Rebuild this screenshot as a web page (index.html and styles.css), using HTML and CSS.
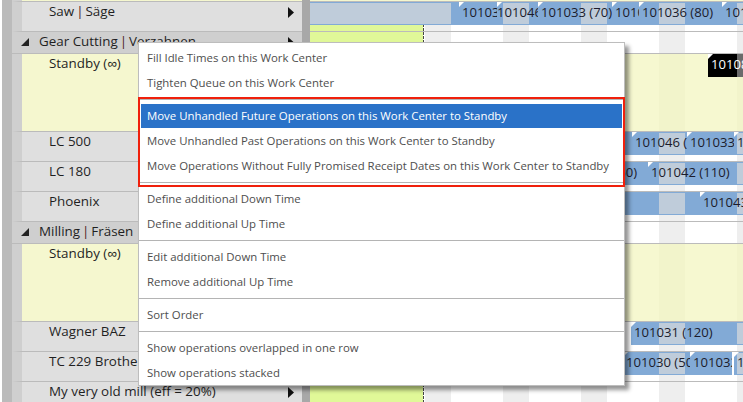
FILE: index.html
```html
<!DOCTYPE html>
<html lang="en">
<head>
<meta charset="utf-8">
<title>Work Center Schedule</title>
<link rel="stylesheet" href="styles.css">
</head>
<body>
<div class="app">
  <div class="rail"></div>
  <div class="labels">
    <div class="tail standby-tail"></div>
    <div class="row"><span class="name">Saw <span class="pipe">|</span> Säge</span><i class="arrow"></i></div>
    <div class="group"><i class="twisty"></i><span class="name">Gear Cutting <span class="pipe">|</span> Verzahnen</span><i class="arrow"></i></div>
    <div class="row standby"><span class="name">Standby (<span class="inf">∞</span>)</span></div>
    <div class="row"><span class="name">LC 500</span><i class="arrow"></i></div>
    <div class="row"><span class="name">LC 180</span><i class="arrow"></i></div>
    <div class="row"><span class="name">Phoenix</span><i class="arrow"></i></div>
    <div class="group"><i class="twisty"></i><span class="name">Milling <span class="pipe">|</span> Fräsen</span><i class="arrow"></i></div>
    <div class="row standby"><span class="name">Standby (<span class="inf">∞</span>)</span></div>
    <div class="row"><span class="name">Wagner BAZ</span><i class="arrow"></i></div>
    <div class="row"><span class="name">TC 229 Brother</span><i class="arrow"></i></div>
    <div class="row last"><span class="name">My very old mill (eff = 20%)</span><i class="arrow"></i></div>
  </div>
  <div class="splitter"></div>
  <div class="chart">
    <div class="today"></div>
    <div class="lane-tail"></div>
    <div class="lane">
      <div class="bar off" style="--x:0px;--w:141px"></div>
      <div class="bar" style="--x:141px;--w:292px"></div>
      <div class="op" style="--x:149px;--w:38px">101032</div>
      <div class="op tight" style="--x:187px;--w:41px">101046</div>
      <div class="op" style="--x:228px;--w:74px">101033 (70)</div>
      <div class="op" style="--x:302px;--w:27px">101033</div>
      <div class="op" style="--x:329px;--w:83px">101036 (80)</div>
      <div class="op" style="--x:412px;--w:21px">101037</div>
    </div>
    <div class="lane head"></div>
    <div class="lane tall">
      <div class="op black" style="--x:398px;--w:35px">101081<b class="black-off"></b></div>
    </div>
    <div class="lane">
      <div class="bar" style="--x:300px;--w:133px"></div>
      <div class="op" style="--x:322px;--w:55px">101046 (90)</div>
      <div class="op" style="--x:377px;--w:47px">101033 (60)</div>
      <div class="op" style="--x:424px;--w:9px">101</div>
    </div>
    <div class="lane">
      <div class="bar" style="--x:300px;--w:133px"></div>
      <div class="op" style="--x:253px;--w:80px">101040 (60)</div>
      <div class="op" style="--x:338px;--w:95px">101042 (110)</div>
    </div>
    <div class="lane">
      <div class="bar" style="--x:300px;--w:133px"></div>
      <div class="op" style="--x:390px;--w:43px">101043</div>
    </div>
    <div class="lane head"></div>
    <div class="lane tall"></div>
    <div class="lane">
      <div class="bar" style="--x:321px;--w:112px"></div>
      <div class="op" style="--x:321px;--w:112px">101031 (120)</div>
    </div>
    <div class="lane">
      <div class="bar" style="--x:300px;--w:122px"></div>
      <div class="bar" style="--x:424px;--w:9px"></div>
      <div class="op" style="--x:313px;--w:67px">101030 (50)</div>
      <div class="op" style="--x:380px;--w:42px">101032</div>
      <div class="op" style="--x:424px;--w:9px">101</div>
    </div>
    <div class="lane"></div>
  </div>
</div>

<div class="menu">
  <div class="item">Fill Idle Times on this Work Center</div>
  <div class="item">Tighten Queue on this Work Center</div>
  <div class="sep"></div>
  <div class="item active">Move Unhandled Future Operations on this Work Center to Standby</div>
  <div class="item">Move Unhandled Past Operations on this Work Center to Standby</div>
  <div class="item">Move Operations Without Fully Promised Receipt Dates on this Work Center to Standby</div>
  <div class="sep"></div>
  <div class="item">Define additional Down Time</div>
  <div class="item">Define additional Up Time</div>
  <div class="sep"></div>
  <div class="item">Edit additional Down Time</div>
  <div class="item">Remove additional Up Time</div>
  <div class="sep"></div>
  <div class="item">Sort Order</div>
  <div class="sep"></div>
  <div class="item">Show operations overlapped in one row</div>
  <div class="item">Show operations stacked</div>
</div>
<div class="callout"></div>
</body>
</html>
```

FILE: styles.css
```css
* { box-sizing: border-box; }
html, body { margin: 0; height: 100%; overflow: hidden; background: #fff; }
body { font-family: "Open Sans", "Noto Sans", sans-serif; color: #1f1f1f; }

.app { display: flex; height: 402px; padding-left: 2px; overflow: hidden; }
.rail { width: 10px; background: #bbbbbb; flex: none; }
.labels { width: 290px; flex: none; display: flex; flex-direction: column; }
.splitter { width: 8px; background: #a8a8a8; flex: none; }
.chart {
  position: relative; flex: 1; min-width: 0; display: flex; flex-direction: column;
  background:
    linear-gradient(90deg, #e0f898 113px, transparent 113px),
    linear-gradient(90deg, #fff 37px, #eeeeee 37px, #eeeeee 63px, #fff 63px) 0 0 / 78px 100%;
}

/* label column */
.tail { height: 2px; flex: none; }
.standby-tail { background: #f5f7cf; border-bottom: 1px solid #bbbbbb; border-left: 10px solid #cfcfcf; }
.row, .group {
  display: flex; justify-content: space-between; flex: none;
  font-size: 13.4px; line-height: 19px; border-bottom: 1px solid #bbbbbb;
}
.row {
  height: 30px; padding: 0 8px 0 27px; background: #dfdfdf; border-left: 10px solid #cfcfcf;
}
.row.standby { height: 78px; background: #f5f7cf; }
.row.last { height: 30px; }
.group { height: 22px; padding: 0 8px 0 9px; background: #cfcfcf; }
.group .name { flex: 1; margin-left: 10px; }
.name { white-space: nowrap; }
.pipe { margin: 0 -1.5px; color: #4a2020; }
.inf { font-family: "Liberation Sans", sans-serif; }
.arrow {
  width: 6px; height: 11px; margin-top: 5px; background: #111; flex: none;
  clip-path: polygon(0 0, 100% 50%, 0 100%);
}
.twisty {
  width: 8px; height: 8px; margin-top: 6px; background: #222; flex: none;
  clip-path: polygon(100% 0, 100% 100%, 0 100%);
}

/* chart lanes */
.today {
  position: absolute; left: 113px; top: 0; bottom: 0; width: 1px;
  background: repeating-linear-gradient(180deg, #444 0 3px, transparent 3px 4px);
}
.lane-tail { height: 2px; flex: none; background: #f5f7cf; border-bottom: 1px solid #bbbbbb; position: relative; }
.lane { position: relative; height: 30px; flex: none; border-bottom: 1px solid #bbbbbb; overflow: hidden; }
.lane.head { height: 22px; }
.lane.tall {
  height: 78px;
  background: linear-gradient(90deg, #f6f8d0 37px, #f2f4cb 37px, #f2f4cb 63px, #f6f8d0 63px) 0 0 / 78px 100%;
}
.bar, .op { position: absolute; top: 0; left: var(--x); width: var(--w); height: 23px; }
.bar {
  border-top: 1px solid #82aad6; border-bottom: 1px solid #82aad6;
  background: linear-gradient(90deg, #82aad6 37px, #bfccda 37px, #bfccda 63px, #82aad6 63px) calc(var(--x) * -1) 0 / 78px 100%;
}
.bar.off { background: #bfccda; }
.op {
  overflow: hidden; white-space: nowrap; padding-left: 3px;
  font-size: 13.1px; line-height: 21px; color: #1c1c2c;
}
.op.tight { padding-left: 0; }
.op::before {
  content: ""; position: absolute; left: 0; top: 0; width: 5px; height: 5px;
  background: #fff; clip-path: polygon(0 0, 100% 0, 0 100%);
}
.op.black { background: #000; color: #fff; }
.black-off { position: absolute; right: 0; top: 0; bottom: 0; width: 6px; background: rgba(255, 255, 255, .42); }

/* context menu */
.menu {
  position: absolute; left: 138px; top: 42px; width: 487px; height: 344px;
  padding: 3px 2px 0; background: #fff; border: 1px solid #bdbdbd;
  box-shadow: 4px 4px 4px rgba(0, 0, 0, .42);
  font-size: 11.4px; color: #4e4e4e;
}
.item {
  height: 25px; line-height: 24px; padding-left: 6px; white-space: nowrap;
  border-bottom: 1px solid transparent; background-clip: padding-box;
}
.item.active { background-color: #2a72c8; color: #fff; }
.sep { height: 8px; margin: 0 -2px; padding-top: 3px; }
.sep::before { content: ""; display: block; height: 1px; background: #b4b4b4; }
.callout {
  position: absolute; left: 138px; top: 97px; width: 487px; height: 90px;
  border: 2px solid #f0200c; pointer-events: none;
}
```
